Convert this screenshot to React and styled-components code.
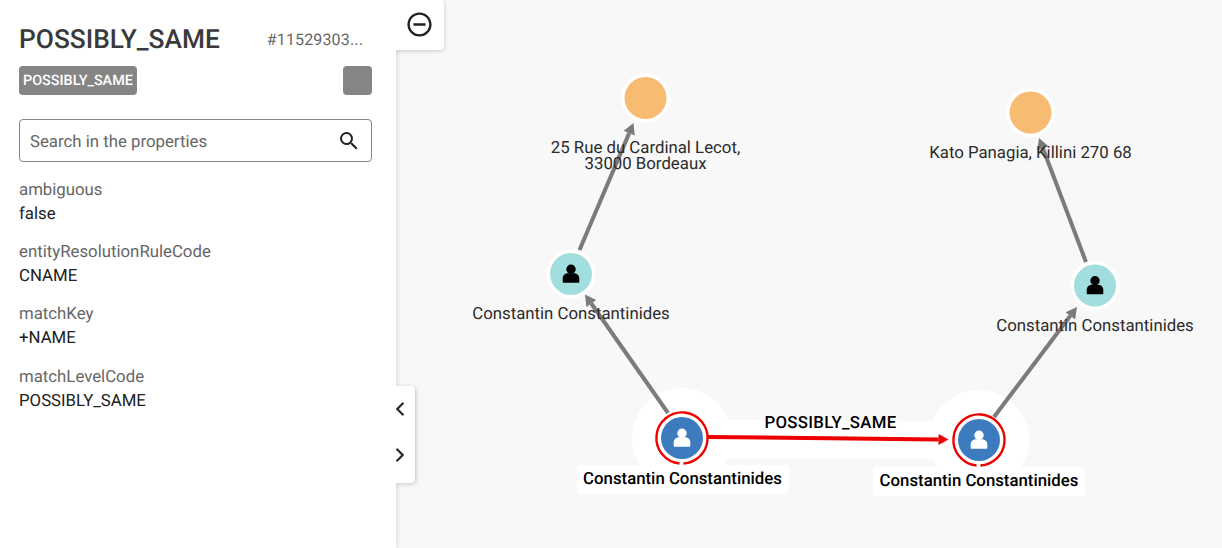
import React from "react";
import styled, { createGlobalStyle } from "styled-components";
import { ChevronLeft, ChevronRight } from "lucide-react";

const properties = [
  { name: "ambiguous", value: "false" },
  { name: "entityResolutionRuleCode", value: "CNAME" },
  { name: "matchKey", value: "+NAME" },
  { name: "matchLevelCode", value: "POSSIBLY_SAME" },
];

const edges = [
  { x1: 579.5, y1: 250, x2: 633.5, y2: 123 },
  { x1: 668, y1: 413, x2: 585, y2: 294.5 },
  { x1: 1086, y1: 262, x2: 1039, y2: 138 },
  { x1: 994, y1: 417, x2: 1077, y2: 307 },
];

const PersonIcon = ({ x, y, fill }) => (
  <g transform={`translate(${x} ${y})`} fill={fill}>
    <circle cx="0" cy="-4.7" r="4.7" />
    <path d="M-7.4 8.7 C-8.1 8.7 -8.3 8.2 -8.3 7.7 L-8.3 4.4 C-8.3 1.2 -5.6 -0.7 -2.8 -0.7 L2.8 -0.7 C5.6 -0.7 8.3 1.2 8.3 4.4 L8.3 7.7 C8.3 8.2 8.1 8.7 7.4 8.7 Z" />
  </g>
);

const Arrow = ({ x1, y1, x2, y2, color, width, head, wing }) => {
  const len = Math.hypot(x2 - x1, y2 - y1);
  const ux = (x2 - x1) / len;
  const uy = (y2 - y1) / len;
  const bx = x2 - ux * head;
  const by = y2 - uy * head;
  return (
    <g>
      <line x1={x1} y1={y1} x2={bx} y2={by} stroke={color} strokeWidth={width} />
      <polygon
        points={`${x2},${y2} ${bx - uy * wing},${by + ux * wing} ${bx + uy * wing},${by - ux * wing}`}
        fill={color}
      />
    </g>
  );
};

const PlainNode = ({ x, y, color, person }) => (
  <g>
    <circle cx={x} cy={y} r="24.5" fill="#fff" />
    <circle cx={x} cy={y} r="21" fill={color} />
    {person && <PersonIcon x={x} y={y} fill="#000" />}
  </g>
);

const SelectedNode = ({ x, y }) => (
  <g>
    <circle
      cx={x}
      cy={y}
      r="25.6"
      fill="#fff"
      stroke="#ee0000"
      strokeWidth="2.4"
      strokeDasharray="155.8 5"
      transform={`rotate(95.5 ${x} ${y})`}
    />
    <circle cx={x} cy={y} r="21" fill="#3d7bbf" />
    <PersonIcon x={x} y={y} fill="#fff" />
  </g>
);

const Graph = () => (
  <GraphSvg viewBox="396 0 826 548">
    <circle cx="682" cy="438" r="50" fill="#fff" />
    <circle cx="979" cy="440" r="50" fill="#fff" />
    <polygon points="720,420 940,421 940,459 720,458" fill="#fff" />
    <rect x="577" y="465" width="212" height="29" rx="4" fill="#fff" />
    <rect x="873" y="467" width="212" height="29" rx="4" fill="#fff" />

    {edges.map((e) => (
      <Arrow key={e.x1} {...e} color="#7b7b7b" width="4" head="11" wing="6" />
    ))}
    <Arrow x1={708} y1={437} x2={948.5} y2={439.5} color="#ee0000" width="4" head="10" wing="5.5" />

    <PlainNode x={645.5} y={98} color="#f7bb72" />
    <PlainNode x={1030.5} y={112.5} color="#f7bb72" />
    <PlainNode x={571} y={274} color="#a2dede" person />
    <PlainNode x={1095} y={285.5} color="#a2dede" person />
    <SelectedNode x={682} y={438} />
    <SelectedNode x={979} y={440} />

    <NodeLabel x="645.5" y="152.5">
      25 Rue du Cardinal Lecot,
      <tspan x="645.5" dy="16.5">33000 Bordeaux</tspan>
    </NodeLabel>
    <NodeLabel x="1030.5" y="158">Kato Panagia, Killini 270 68</NodeLabel>
    <NodeLabel x="571" y="319">Constantin Constantinides</NodeLabel>
    <NodeLabel x="1095" y="331">Constantin Constantinides</NodeLabel>
    <NodeLabel x="682.5" y="484" $bold>Constantin Constantinides</NodeLabel>
    <NodeLabel x="979" y="486" $bold>Constantin Constantinides</NodeLabel>
    <EdgeLabel x="830.5" y="427.5" $bold>POSSIBLY_SAME</EdgeLabel>
  </GraphSvg>
);

const App = () => (
  <Page>
    <GlobalStyle />
    <Panel>
      <TitleRow>
        <Title>POSSIBLY_SAME</Title>
        <ItemId>#11529303...</ItemId>
      </TitleRow>
      <TagRow>
        <Tag>POSSIBLY_SAME</Tag>
        <Swatch />
      </TagRow>
      <SearchBox>
        <SearchInput placeholder="Search in the properties" readOnly />
        <svg width="24" height="24" viewBox="0 0 24 24" fill="#212121">
          <path d="M15.5 14h-.79l-.28-.27A6.471 6.471 0 0 0 16 9.5 6.5 6.5 0 1 0 9.5 16c1.61 0 3.09-.59 4.23-1.57l.27.28v.79l5 4.99L20.49 19l-4.99-5zm-6 0C7.01 14 5 11.99 5 9.5S7.01 5 9.5 5 14 7.01 14 9.5 11.99 14 9.5 14z" />
        </svg>
      </SearchBox>
      <PropertyList>
        {properties.map((p) => (
          <Property key={p.name}>
            <PropertyName>{p.name}</PropertyName>
            <PropertyValue>{p.value}</PropertyValue>
          </Property>
        ))}
      </PropertyList>
    </Panel>
    <Canvas>
      <Graph />
      <ZoomButton>
        <svg width="29" height="29" viewBox="0 0 24 24" fill="#212121">
          <path d="M7 11v2h10v-2H7zm5-9C6.48 2 2 6.48 2 12s4.48 10 10 10 10-4.48 10-10S17.52 2 12 2zm0 18c-4.41 0-8-3.59-8-8s3.59-8 8-8 8 3.59 8 8-3.59 8-8 8z" />
        </svg>
      </ZoomButton>
      <CollapseHandle>
        <ChevronLeft size={22} strokeWidth={2.6} color="#2b2b2b" />
        <ChevronRight size={22} strokeWidth={2.6} color="#2b2b2b" />
      </CollapseHandle>
    </Canvas>
  </Page>
);

const GlobalStyle = createGlobalStyle`
  html, body {
    margin: 0;
    padding: 0;
    overflow: hidden;
  }
  body {
    font-family: Roboto, "Liberation Sans", sans-serif;
    color: #212121;
    text-rendering: geometricPrecision;
  }
`;

const Page = styled.div`
  display: flex;
  width: 1222px;
  height: 548px;
  background: #f8f8f8;
`;

const Panel = styled.aside`
  box-sizing: border-box;
  width: 396px;
  flex-shrink: 0;
  padding: 0 24px 0 19px;
  background: #fff;
  box-shadow: 0 0 6px rgba(0, 0, 0, 0.18);
  z-index: 2;
`;

const TitleRow = styled.div`
  display: flex;
  align-items: center;
  justify-content: space-between;
  height: 78px;
`;

const Title = styled.h1`
  margin: 0;
  padding-top: 1px;
  font-size: 26.3px;
  font-weight: 500;
  color: #3a3a3a;
`;

const ItemId = styled.span`
  margin-right: 9px;
  font-size: 16px;
  letter-spacing: 0.15px;
  color: #666;
`;

const TagRow = styled.div`
  display: flex;
  align-items: center;
  justify-content: space-between;
  height: 29px;
  margin-top: -12px;
`;

const Tag = styled.span`
  display: flex;
  align-items: center;
  height: 29px;
  padding: 0 4px;
  border-radius: 4px;
  background: #858585;
  color: #fff;
  font-size: 14.4px;
  font-weight: 500;
`;

const Swatch = styled.span`
  width: 29px;
  height: 29px;
  border-radius: 4px;
  background: #858585;
`;

const SearchBox = styled.div`
  box-sizing: border-box;
  display: flex;
  align-items: center;
  height: 43px;
  margin-top: 24px;
  padding: 0 10px;
  border: 1px solid #858585;
  border-radius: 4px;
`;

const SearchInput = styled.input`
  flex: 1;
  min-width: 0;
  padding: 2px 0 0;
  border: 0;
  outline: 0;
  background: transparent;
  font: 400 16.8px Roboto, sans-serif;
  text-rendering: geometricPrecision;
  &::placeholder {
    color: #666;
    opacity: 1;
  }
`;

const PropertyList = styled.div`
  display: flex;
  flex-direction: column;
  gap: 19.3px;
  margin-top: 18.7px;
`;

const Property = styled.div`
  display: flex;
  flex-direction: column;
  gap: 5px;
  font-size: 16.8px;
  line-height: 19px;
`;

const PropertyName = styled.span`
  color: #666;
`;

const PropertyValue = styled.span`
  color: #212121;
`;

const Canvas = styled.main`
  position: relative;
  flex: 1;
`;

const GraphSvg = styled.svg`
  display: block;
  width: 826px;
  height: 548px;
`;

const NodeLabel = styled.text`
  font-family: Roboto, sans-serif;
  font-size: 16.8px;
  font-weight: ${(p) => (p.$bold ? 500 : 400)};
  fill: ${(p) => (p.$bold ? "#000" : "#2b2b2b")};
  text-anchor: middle;
`;

const EdgeLabel = styled(NodeLabel)`
  letter-spacing: 0.3px;
`;

const ZoomButton = styled.div`
  position: absolute;
  top: 0;
  left: 0;
  display: flex;
  align-items: center;
  justify-content: center;
  box-sizing: border-box;
  width: 48px;
  height: 50px;
  padding: 0 1px 2px 0;
  background: #fff;
  border-radius: 0 4px 4px 0;
  box-shadow: 0 1px 4px rgba(0, 0, 0, 0.2);
  clip-path: inset(0 -10px -10px 0);
  z-index: 3;
`;

const CollapseHandle = styled.div`
  position: absolute;
  top: 386px;
  left: 0;
  display: flex;
  flex-direction: column;
  gap: 24px;
  box-sizing: border-box;
  width: 19px;
  height: 97px;
  padding-top: 12px;
  background: #fff;
  border-radius: 0 4px 4px 0;
  box-shadow: 1px 1px 4px rgba(0, 0, 0, 0.2);
  clip-path: inset(-10px -10px -10px 0);
  z-index: 3;

  svg {
    margin-left: -7px;
  }
`;

export default App;
